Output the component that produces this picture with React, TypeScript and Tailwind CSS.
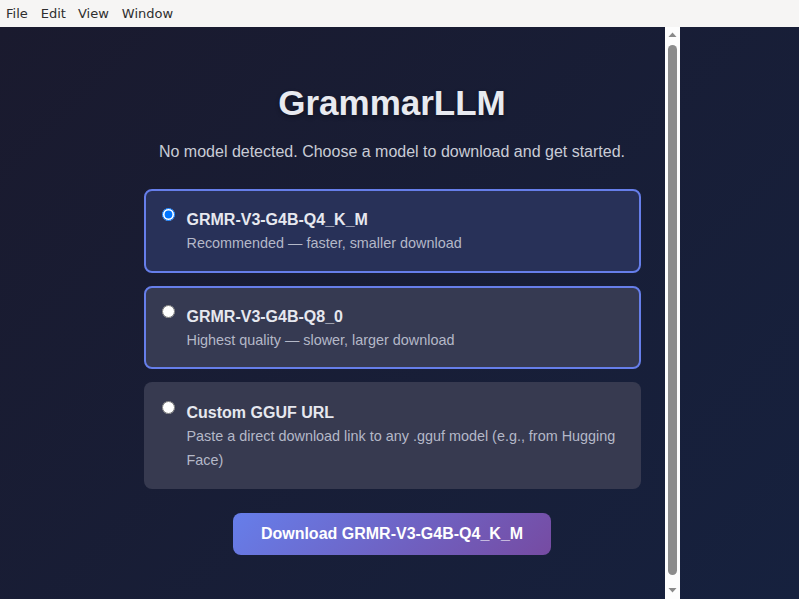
import React, { useState } from "react";

const models = [
  { id: "q4", name: "GRMR-V3-G4B-Q4_K_M", desc: "Recommended — faster, smaller download" },
  { id: "q8", name: "GRMR-V3-G4B-Q8_0", desc: "Highest quality — slower, larger download" },
  { id: "custom", name: "Custom GGUF URL", desc: "Paste a direct download link to any .gguf model (e.g., from Hugging Face)" },
];

export default function App() {
  const [sel, setSel] = useState("q4");
  return (
    <div className="w-[799px] h-[599px] overflow-hidden flex flex-col" style={{ fontFamily: '"Liberation Sans", Arial, sans-serif' }}>
      <div
        className="h-[27px] shrink-0 bg-[#f6f5f4] flex items-center text-[13px] text-[#2e2e2e]"
        style={{ fontFamily: '"DejaVu Sans", sans-serif' }}
      >
        <span className="ml-[6px]">File</span>
        <span className="ml-[13px]">Edit</span>
        <span className="ml-[12px]">View</span>
        <span className="ml-[13px]">Window</span>
      </div>
      <div className="relative flex-1 bg-[linear-gradient(135deg,#1a1a2e_0%,#16213e_100%)]">
        <div className="pr-[15px] flex flex-col items-center pt-[56px]">
          <h1 className="text-[35px] leading-[40px] font-bold text-[#e8eaf0] [text-shadow:0_2px_4px_rgba(0,0,0,0.35)]">
            GrammarLLM
          </h1>
          <p className="mt-[17px] text-[16px] leading-[24px] text-[#c9ccd6]">
            No model detected. Choose a model to download and get started.
          </p>
          <div className="mt-[25px] w-[497px] flex flex-col gap-[13px]">
            {models.map((m) => {
              const checked = sel === m.id;
              const border =
                m.id === "q4"
                  ? "border-[#667eea] bg-[#283158]"
                  : m.id === "q8"
                  ? "border-[#667eea] bg-[#363a52]"
                  : "border-transparent bg-[#373a50]";
              return (
                <label
                  key={m.id}
                  className={`flex items-start gap-[12px] rounded-[8px] border-2 px-[16px] pt-[17px] pb-[15px] cursor-pointer ${border}`}
                >
                  <input
                    type="radio"
                    name="model"
                    checked={checked}
                    onChange={() => setSel(m.id)}
                    className="m-0 mt-[0px] w-[13px] h-[13px] shrink-0"
                  />
                  <div className="flex flex-col">
                    <span className="text-[16px] leading-[24px] font-bold text-[#e6e8ef]">{m.name}</span>
                    <span className="text-[14.4px] leading-[23.5px] text-[#b4b8c8]">{m.desc}</span>
                  </div>
                </label>
              );
            })}
          </div>
          <button className="mt-[24px] h-[42px] px-[28px] rounded-[8px] text-white text-[16px] font-bold bg-[linear-gradient(135deg,#667eea_0%,#764ba2_100%)]">
            Download GRMR-V3-G4B-Q4_K_M
          </button>
        </div>
        <div className="absolute top-0 bottom-0 left-[665px] w-[15px] bg-[#fdfdfd] flex flex-col items-center">
          <svg width="9" height="6" viewBox="0 0 9 6" className="mt-[5px]">
            <polygon points="4.5,0.5 8.5,5 0.5,5" fill="#8a8a8a" />
          </svg>
          <div className="mt-[7px] w-[9px] flex-1 rounded-full bg-[#8c8c8c]" />
          <svg width="9" height="6" viewBox="0 0 9 6" className="mt-[12px] mb-[6px]">
            <polygon points="0.5,1 8.5,1 4.5,5.5" fill="#8a8a8a" />
          </svg>
        </div>
      </div>
    </div>
  );
}
